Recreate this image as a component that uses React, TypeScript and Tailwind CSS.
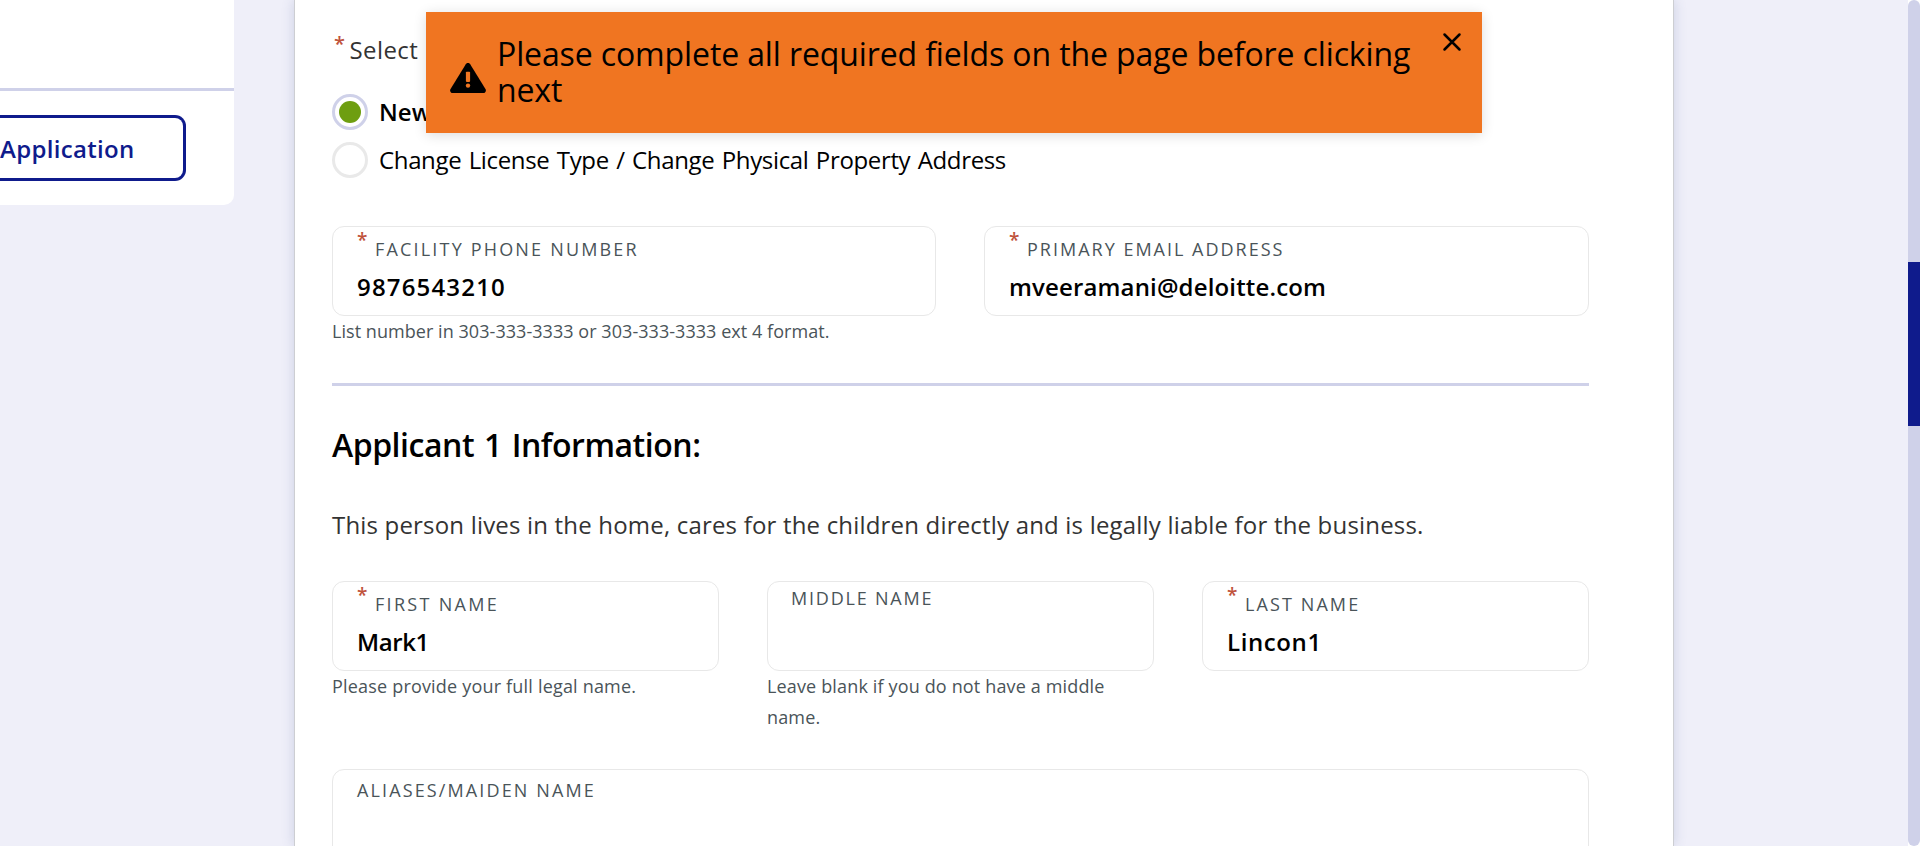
import type { ReactNode } from 'react';
import clsx from 'clsx';

type FieldProps = {
  label: string;
  labelClass: string;
  value?: string;
  valueClass?: string;
  required?: boolean;
  help?: string;
  helpClass?: string;
};

function Asterisk() {
  return <span className="w-[18px] shrink-0 text-[19px] leading-[19px] font-semibold text-[#c0533c]">*</span>;
}

function Field({ label, labelClass, value, valueClass, required, help, helpClass }: FieldProps) {
  return (
    <div>
      <div className="h-[90px] rounded-xl border border-[#e8e8e8] pl-6">
        <div className={clsx('flex h-8 items-start', required ? 'pt-1' : 'pt-1.5')}>
          {required && <Asterisk />}
          <label
            className={clsx(
              'text-lg leading-5 whitespace-nowrap text-[#4a5459] uppercase',
              labelClass,
              required && 'mt-2',
            )}
          >
            {label}
          </label>
        </div>
        {value && (
          <div className={clsx('mt-[13px] text-2xl leading-[30px] font-semibold text-black', valueClass)}>{value}</div>
        )}
      </div>
      {help && <p className={clsx('text-lg leading-[31px] text-[#4a5459]', helpClass)}>{help}</p>}
    </div>
  );
}

function Radio({ checked, children }: { checked?: boolean; children: ReactNode }) {
  return (
    <div className="flex h-9 items-start gap-[11px]">
      <span
        className={clsx(
          'flex size-9 shrink-0 items-center justify-center rounded-full border-3',
          checked ? 'border-[#cfd1e9]' : 'border-[#e9e9e9]',
        )}
      >
        {checked && <span className="size-[22px] rounded-full bg-[#6e9e10]" />}
      </span>
      {children}
    </div>
  );
}

function Toast() {
  return (
    <div className="absolute top-3 left-[426px] flex h-[121px] w-[1056px] bg-[#f07521] shadow-[0_2px_12px_rgba(0,0,0,0.14)]">
      <svg className="mt-[51px] ml-6 h-[30px] w-9 shrink-0" viewBox="0 0 36 30">
        <path
          d="M18 0c.9 0 1.7.5 2.2 1.2l15.4 25c.8 1.700-.3 3.800-2.200 3.800H2.600C.7 30-.4 27.900.4 26.200l15.400-25C16.300.5 17.100 0 18 0Z"
          fill="#000"
        />
        <rect x="15.900" y="8.700" width="4.200" height="10.200" rx="0.800" fill="#f07521" />
        <circle cx="18" cy="22.600" r="2.200" fill="#f07521" />
      </svg>
      <p className="mt-6 ml-[11px] w-[925px] text-[32px] leading-9 tracking-[-0.12px] text-black">
        Please complete all required fields on the page before clicking next
      </p>
      <svg className="mt-5 ml-5 size-5 shrink-0" viewBox="0 0 20 20" stroke="#000" strokeWidth="2.500" strokeLinecap="round">
        <path d="M2.500 2.500l15 15M17.500 2.500l-15 15" />
      </svg>
    </div>
  );
}

export default function App() {
  return (
    <div className="relative flex h-[846px] w-full overflow-hidden bg-[#efeff9] font-['Open_Sans','Noto_Sans',sans-serif]">
      <aside className="h-[205px] w-[234px] shrink-0 rounded-br-[10px] bg-white pt-[88px]">
        <div className="h-[3px] bg-[#cfd1e9]" />
        <button className="mt-6 block h-[66px] w-[186px] rounded-r-[11px] border-3 border-l-0 border-[#0f1b8c] pt-px pb-0 text-left text-2xl font-semibold tracking-[0.32px] text-[#0f1b8c]">
          Application
        </button>
      </aside>

      <main className="ml-[60px] h-[846px] w-[1380px] shrink-0 border-x border-[#cdced2] bg-white pt-8 pr-[84px] pl-[37px] shadow-[0_0_12px_rgba(60,80,140,0.2)]">
        <div className="flex h-9 items-start pt-0.5 pl-0.5">
          <span className="w-[15.5px] shrink-0 text-[20px] leading-[19px] font-semibold text-[#c0533c]">*</span>
          <span className="-mt-0.5 text-2xl leading-9 tracking-[0.4px] text-[#333]">Select</span>
        </div>
        <div className="mt-[26px] flex flex-col gap-3">
          <Radio checked>
            <span className="text-2xl leading-9 font-semibold text-black">New</span>
          </Radio>
          <Radio>
            <span className="text-2xl leading-9 tracking-[-0.35px] text-black [word-spacing:1.5px]">
              Change License Type / Change Physical Property Address
            </span>
          </Radio>
        </div>

        <div className="mt-12 grid grid-cols-[604px_605px] gap-12">
          <Field
            required
            label="Facility Phone Number"
            labelClass="tracking-[2.18px]"
            value="9876543210"
            valueClass="tracking-[1.17px]"
            help="List number in 303-333-3333 or 303-333-3333 ext 4 format."
            helpClass="tracking-[0.05px]"
          />
          <Field
            required
            label="Primary Email Address"
            labelClass="tracking-[2px]"
            value="mveeramani@deloitte.com"
            valueClass="tracking-[0.15px]"
          />
        </div>

        <div className="mt-9 h-[3px] bg-[#cfd1e9]" />

        <h2 className="mt-[37px] text-[32px] leading-[44px] font-semibold tracking-[-0.46px] text-black [word-spacing:2px]">
          Applicant 1 Information:
        </h2>
        <p className="mt-10 text-2xl leading-9 tracking-[0.185px] whitespace-nowrap text-[#333]">
          This person lives in the home, cares for the children directly and is legally liable for the business.
        </p>

        <div className="mt-[38px] grid grid-cols-3 gap-12">
          <Field
            required
            label="First Name"
            labelClass="tracking-[2.3px]"
            value="Mark1"
            valueClass="tracking-[-0.4px]"
            help="Please provide your full legal name."
            helpClass="tracking-[0.19px]"
          />
          <Field
            label="Middle Name"
            labelClass="tracking-[1.8px] -ml-px"
            help="Leave blank if you do not have a middle name."
            helpClass="tracking-[0.15px]"
          />
          <Field
            required
            label="Last Name"
            labelClass="tracking-[2.1px]"
            value="Lincon1"
            valueClass="tracking-[0.6px]"
          />
        </div>

        <div className="mt-9 h-[140px] rounded-xl border border-[#e8e8e8] pt-2.5 pl-6">
          <label className="block text-lg leading-5 tracking-[2.12px] text-[#4a5459] uppercase">Aliases/Maiden Name</label>
        </div>
      </main>

      <div className="ml-auto w-3 shrink-0 bg-white">
        <div className="h-full rounded-md bg-[#cfd1e9] pt-[262px]">
          <div className="h-[164px] bg-[#0f1b8c]" />
        </div>
      </div>

      <Toast />
    </div>
  );
}
